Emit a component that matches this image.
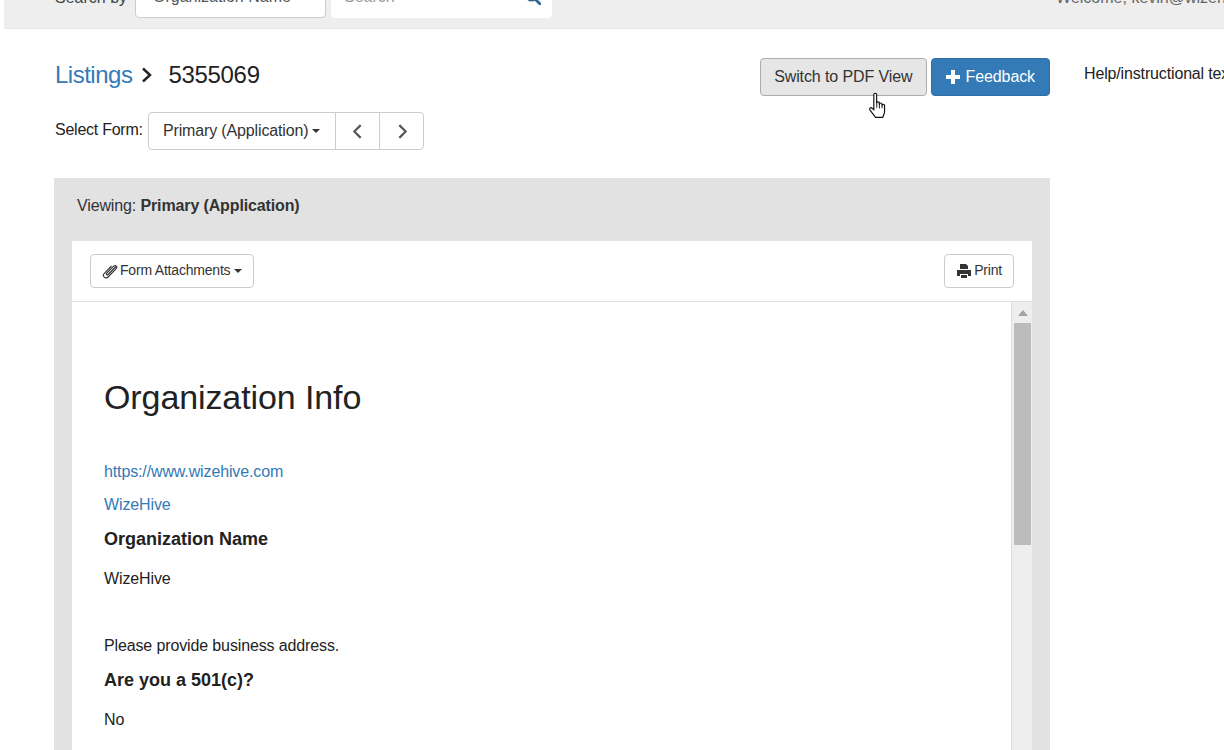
<script lang="ts">
  // Listing detail page, form view
  const answers = [
    { q: "Organization Name", a: "WizeHive" },
    { q: "Are you a 501(c)?", a: "No" },
  ];
</script>

<div class="page">
  <header class="topbar">
    <div class="search">
      <span class="search-label">Search by</span>
      <div class="search-select">
        <span>Organization Name</span>
        <svg class="mini-caret" viewBox="0 0 8 4" width="6" height="3"><path d="M0 0h8L4 4z" fill="#555" /></svg>
      </div>
      <div class="search-input">
        <span>Search</span>
        <svg viewBox="0 0 16 16" width="16" height="16">
          <circle cx="6.5" cy="6.5" r="5" fill="none" stroke="#31658f" stroke-width="2.2" />
          <path d="M10.2 10.2l4.6 4.6" stroke="#31658f" stroke-width="2.8" stroke-linecap="round" />
        </svg>
      </div>
    </div>
    <div class="welcome">Welcome, kevin@wizehive.com</div>
  </header>

  <div class="content">
    <main class="main">
      <div class="title-row">
        <div class="crumbs">
          <a href="#listings">Listings</a>
          <svg class="crumb-sep" viewBox="0 0 12 16" width="12" height="16">
            <path d="M2 1.500l7 6.500-7 6.500" fill="none" stroke="#222" stroke-width="2.400" />
          </svg>
          <span>5355069</span>
        </div>
        <div class="actions">
          <button class="btn pdf">Switch to PDF View</button>
          <button class="btn feedback">
            <svg viewBox="0 0 16 16" width="16" height="16"><path d="M6 1h4v5h5v4h-5v5H6v-5H1V6h5z" fill="#fff" /></svg>
            Feedback
          </button>
          <svg class="cursor" viewBox="0 0 18 24" width="21" height="28">
            <path
              d="M5 2.200c0-1.500 2.400-1.500 2.400 0v7.200c0-1.300 2.300-1.300 2.300 0v1c0-1.300 2.300-1.300 2.300 0v1c0-1.200 2.200-1.200 2.200 0v5.200c0 2.400-1 3.200-1.500 5.200H6.500C5.500 20 3.800 18.500 1.700 15.500c-1-1.500.8-2.700 2-1.500L5 15.300z"
              fill="#fff"
              stroke="#111"
              stroke-width="1"
              stroke-linejoin="round"
            />
            <path d="M7.500 9.500v4M9.800 10v4M12.100 11v3" stroke="#111" stroke-width=".8" />
          </svg>
        </div>
      </div>

      <div class="form-picker">
        <span class="picker-label">Select Form:</span>
        <div class="btn-group">
          <button class="seg seg-main">Primary (Application) <i class="caret"></i></button>
          <button class="seg seg-icon" aria-label="Previous">
            <svg viewBox="0 0 10 16" width="11" height="17"><path d="M8 2L2 8l6 6" fill="none" stroke="#555" stroke-width="2" /></svg>
          </button>
          <button class="seg seg-icon next" aria-label="Next">
            <svg viewBox="0 0 10 16" width="11" height="17"><path d="M2 2l6 6-6 6" fill="none" stroke="#555" stroke-width="2" /></svg>
          </button>
        </div>
      </div>

      <section class="viewer">
        <div class="viewing">Viewing: <strong>Primary (Application)</strong></div>
        <div class="sheet">
          <div class="toolbar">
            <button class="tool">
              <svg viewBox="0 0 16 16" width="16" height="16">
                <path
                  d="M14 3.500L6 11.500c-1 1-2.300-.3-1.300-1.300l7-7c1.800-1.800 4.300.7 2.500 2.500L6 14c-2.600 2.600-6.300-1.100-3.700-3.700L9.500 3"
                  fill="none"
                  stroke="#333"
                  stroke-width="1.100"
                />
              </svg>
              <span class="tool-text">Form Attachments</span> <i class="caret"></i>
            </button>
            <button class="tool">
              <svg viewBox="0 0 16 16" width="16" height="16">
                <path d="M4 1h6l2 2v3H4zM1 7h14v6h-3v-2H4v2H1zM5 12h6v3H5z" fill="#333" />
              </svg>
              <span class="tool-text">Print</span>
            </button>
          </div>
          <div class="scroll-area">
            <div class="doc">
              <h1>Organization Info</h1>
              <p class="link"><a href="#site">https://www.wizehive.com</a></p>
              <p class="link"><a href="#name">WizeHive</a></p>
              <h4>{answers[0].q}</h4>
              <p class="answer">{answers[0].a}</p>
              <p class="prompt">Please provide business address.</p>
              <h4>{answers[1].q}</h4>
              <p class="answer">{answers[1].a}</p>
            </div>
            <div class="scrollbar">
              <svg class="arrow" viewBox="0 0 10 6" width="10" height="6"><path d="M0 6l5-6 5 6z" fill="#a3a3a3" /></svg>
              <div class="thumb"></div>
            </div>
          </div>
        </div>
      </section>
    </main>

    <aside class="help">Help/instructional text goes here</aside>
  </div>
</div>

<style>
  :global(body) {
    margin: 0;
    background: #fff;
  }

  .page {
    width: 1224px;
    height: 750px;
    overflow: hidden;
    padding-left: 4px;
    box-sizing: border-box;
    font-family: "Liberation Sans", Arial, sans-serif;
    font-size: 16px;
    color: #222;
  }

  .topbar {
    height: 28px;
    margin-right: -4px;
    background: #eee;
    border-bottom: 1px solid #e6e6e6;
    display: flex;
    justify-content: space-between;
    align-items: flex-end;
    overflow: hidden;
  }

  .search {
    display: flex;
    align-items: flex-end;
    padding-left: 51px;
  }

  .search-label {
    color: #444;
    margin-bottom: 19px;
    margin-right: 8px;
    line-height: 22px;
  }

  .search-select,
  .search-input {
    height: 34px;
    box-sizing: border-box;
    background: #fff;
    border-radius: 4px;
    display: flex;
    align-items: center;
    justify-content: space-between;
    margin-bottom: 10px;
  }

  .search-select {
    width: 191px;
    border: 1px solid #ccc;
    padding: 0 0 8px 17px;
    color: #555;
  }

  .mini-caret {
    margin-right: 0;
  }

  .search-input {
    width: 221px;
    margin-left: 5px;
    padding: 0 11px 8px 13px;
    color: #999;
  }

  .welcome {
    color: #666;
    margin-bottom: 19px;
    line-height: 22px;
    white-space: nowrap;
    margin-right: -53px;
  }

  .content {
    display: flex;
    align-items: flex-start;
    padding-left: 50px;
  }

  .main {
    width: 996px;
    flex-shrink: 0;
  }

  .help {
    margin-left: 34px;
    margin-top: 35px;
    white-space: nowrap;
    line-height: 20px;
    letter-spacing: -0.15px;
  }

  .title-row {
    display: flex;
    justify-content: space-between;
    padding-top: 29px;
    height: 38px;
  }

  .crumbs {
    display: flex;
    align-items: center;
    height: 36px;
    font-size: 24px;
    letter-spacing: -0.3px;
    margin-left: 1px;
    margin-top: -1px;
  }

  .crumbs a {
    color: #337ab7;
    text-decoration: none;
    letter-spacing: -0.5px;
  }

  .crumb-sep {
    margin: 0 15px 0 9px;
  }

  .actions {
    display: flex;
    gap: 4px;
    position: relative;
    height: 38px;
  }

  .btn {
    font: inherit;
    height: 38px;
    border-radius: 4px;
    padding: 0 13px;
    cursor: pointer;
    display: flex;
    align-items: center;
    gap: 5px;
    letter-spacing: -0.1px;
  }

  .pdf {
    background: #e6e6e6;
    border: 1px solid #adadad;
    color: #333;
  }

  .feedback {
    background: #337ab7;
    border: 1px solid #2e6da4;
    color: #fff;
    padding: 0 14px 0 13px;
  }

  .cursor {
    position: absolute;
    left: 108px;
    top: 34px;
  }

  .form-picker {
    display: flex;
    align-items: center;
    height: 38px;
    margin-top: 16px;
    margin-left: 1px;
  }

  .picker-label {
    margin-right: 5px;
    margin-top: -3px;
    letter-spacing: -0.25px;
  }

  .btn-group {
    display: flex;
  }

  .seg {
    font: inherit;
    letter-spacing: -0.15px;
    height: 38px;
    background: #fff;
    color: #333;
    border: 1px solid #ccc;
    margin-left: -1px;
    padding: 0;
    display: flex;
    align-items: center;
    justify-content: center;
    gap: 4px;
  }

  .seg-main {
    width: 188px;
    margin-left: 0;
    border-radius: 4px 0 0 4px;
  }

  .seg-icon {
    width: 45px;
  }

  .next {
    padding-left: 2px;
    border-radius: 0 4px 4px 0;
  }

  .caret {
    display: inline-block;
    border-top: 4px solid #333;
    border-left: 4px solid transparent;
    border-right: 4px solid transparent;
  }

  .viewer {
    margin-top: 28px;
    background: #e2e2e2;
    padding: 0 18px;
    height: 600px;
    box-sizing: border-box;
  }

  .viewing {
    padding: 18px 5px 0;
    height: 63px;
    box-sizing: border-box;
    line-height: 20px;
    color: #333;
    letter-spacing: -0.13px;
  }

  .sheet {
    background: #fff;
  }

  .toolbar {
    height: 61px;
    box-sizing: border-box;
    border-bottom: 1px solid #ddd;
    display: flex;
    justify-content: space-between;
    align-items: center;
    padding: 0 18px;
  }

  .tool {
    font: inherit;
    font-size: 14px;
    letter-spacing: -0.2px;
    height: 34px;
    background: #fff;
    color: #333;
    border: 1px solid #ccc;
    border-radius: 4px;
    padding: 0 11px;
    display: flex;
    align-items: center;
    gap: 2px;
  }

  .tool .caret {
    margin-left: 2px;
    border-left-width: 4.5px;
    border-right-width: 4.5px;
  }

  .tool-text {
    margin-bottom: 2px;
  }

  .scroll-area {
    display: flex;
    height: 480px;
  }

  .doc {
    flex: 1;
    padding: 0 32px;
    min-width: 0;
    border-right: 1px solid #ddd;
  }

  .doc h1 {
    font-size: 34px;
    font-weight: 400;
    line-height: 40px;
    margin: 75px 0 45px;
    color: #222;
    letter-spacing: -0.1px;
  }

  .doc p {
    margin: 0;
    line-height: 20px;
    letter-spacing: -0.13px;
  }

  .link {
    margin-bottom: 13px !important;
  }

  .doc a {
    color: #337ab7;
    text-decoration: none;
  }

  .doc h4 {
    font-size: 18px;
    font-weight: 700;
    line-height: 20px;
    margin: 0;
  }

  .link + h4 {
    padding-top: 1px;
  }

  .answer {
    margin-top: 20px !important;
  }

  .prompt {
    margin-top: 47px !important;
    margin-bottom: 14px !important;
  }

  .scrollbar {
    width: 20px;
    flex-shrink: 0;
    background: #eee;
    box-sizing: border-box;
    padding: 0 1px 0 2px;
    display: flex;
    flex-direction: column;
    align-items: center;
  }

  .arrow {
    margin: 8px 0 7px;
  }

  .thumb {
    width: 100%;
    height: 222px;
    background: #bcbcbc;
  }
</style>
